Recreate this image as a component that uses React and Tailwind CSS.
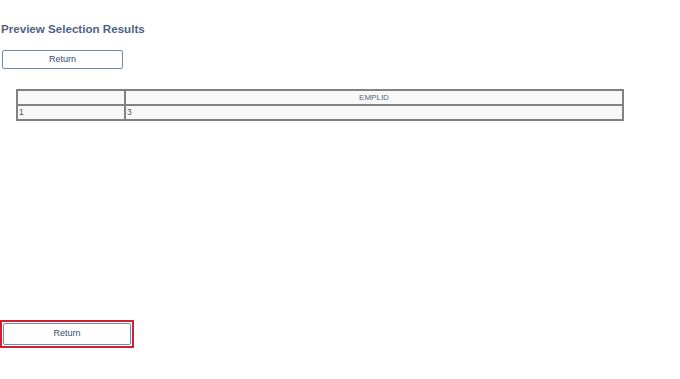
export default function App() {
  return (
    <div className="w-[680px] h-[379px] bg-white relative overflow-hidden" style={{ fontFamily: '"Liberation Sans", Arial, sans-serif' }}>
      <div className="pt-[22px] pl-[1px]">
        <div className="text-[11.6px] font-bold text-[#4d6280] leading-[14px]">Preview Selection Results</div>
        <button className="mt-[14px] ml-[1px] w-[121px] h-[19px] border border-[#6f8cab] rounded-[2px] bg-white text-[9px] text-[#2f4d70] flex items-center justify-center">Return</button>
        <table className="mt-[20px] ml-[15px] w-[608px] border-collapse border-2 border-[#828282] text-[8.5px] text-[#555]">
          <tbody>
            <tr className="h-[15px] bg-[#f8f8f8]">
              <td className="w-[108px] border-2 border-[#828282] p-0"></td>
              <td className="border-2 border-[#828282] text-center text-[#55677f] p-0 leading-[11px] text-[8px]">EMPLID</td>
            </tr>
            <tr className="h-[15px] bg-[#f8f8f8]">
              <td className="border-2 border-[#828282] pl-[1px] p-0 leading-[11px]">1</td>
              <td className="border-2 border-[#828282] pl-[1px] p-0 leading-[11px]">3</td>
            </tr>
          </tbody>
        </table>
        <div className="mt-[199px] w-[134px] h-[28px] border-2 border-[#d0202e] p-[1px] -ml-[1px]">
          <button className="w-full h-full border border-[#6f8cab] rounded-[2px] bg-white text-[9px] text-[#2f4d70] flex items-center justify-center">Return</button>
        </div>
      </div>
    </div>
  );
}
